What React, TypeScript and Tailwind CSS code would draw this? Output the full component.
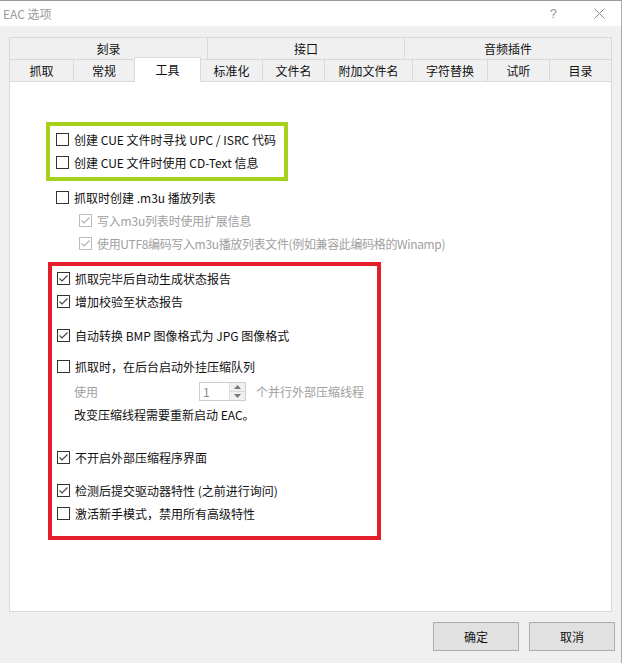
import React from "react";

function Box({ checked = false, disabled = false }: { checked?: boolean; disabled?: boolean }) {
  const c = disabled ? "#bcbcbc" : "#333333";
  return (
    <svg width="13" height="13" viewBox="0 0 13 13" className="shrink-0">
      <rect x="0.5" y="0.5" width="12" height="12" fill="#ffffff" stroke={c} />
      {checked && <path d="M2.5 6.5 L5 9 L10.5 3.5" fill="none" stroke={disabled ? "#b0b0b0" : "#444444"} strokeWidth="1.1" />}
    </svg>
  );
}

function Row({
  label,
  checked = false,
  disabled = false,
  cls = "",
  tcls = "",
}: {
  label: string;
  checked?: boolean;
  disabled?: boolean;
  cls?: string;
  tcls?: string;
}) {
  return (
    <div className={"flex h-[23px] items-center gap-[5px] " + cls}>
      <Box checked={checked} disabled={disabled} />
      <span className={"whitespace-nowrap leading-none " + (disabled ? "text-[#a0a0a0] " : "text-[#111111] ") + tcls}>{label}</span>
    </div>
  );
}

const row1 = [
  { t: "刻录", w: "w-[198px]" },
  { t: "接口", w: "w-[197px]" },
  { t: "音频插件", w: "w-[208px] border-r" },
];

export default function App() {
  return (
    <div className="w-[623px] h-[663px] bg-white font-['Microsoft_YaHei','Noto_Sans_CJK_SC',sans-serif] text-[12px]">
      <div className="w-[622px] h-[663px] bg-[#f0f0f0] border-r border-[#aaaaaa] flex flex-col">
        {/* title bar */}
        <div className="h-[26px] bg-white border-t border-[#9a9a9a] flex items-center pl-[3px] shrink-0">
          <span className="text-[#999999] leading-none">EAC 选项</span>
          <div className="flex-1" />
          <span className="text-[#999999] text-[13px] leading-none mr-[37px] font-['Liberation_Sans']">?</span>
          <svg width="11" height="11" viewBox="0 0 11 11" className="mr-[16px]">
            <path d="M0.5 0.5 L10.5 10.5 M10.5 0.5 L0.5 10.5" stroke="#8a8a8a" strokeWidth="1" />
          </svg>
        </div>

        <div className="pl-[9px] pt-[11px] flex flex-col">
          {/* tab row 1 */}
          <div className="flex h-[22px]">
            {row1.map((r) => (
              <div
                key={r.t}
                className={"h-[22px] border-t border-l border-[#d9d9d9] bg-[#f0f0f0] flex items-center justify-center text-[#111111] leading-none " + r.w}
              >
                {r.t}
              </div>
            ))}
          </div>
          {/* tab row 2 */}
          <div className="flex h-[22px] items-start">
            <Tab w="w-[64px]" t="抓取" />
            <Tab w="w-[61px]" t="常规" />
            <div className="relative z-10 w-[67px] -mr-[1px] -mt-[2px] h-[25px] bg-white border-t border-l border-r border-[#d9d9d9] flex items-center justify-center leading-none text-[#111111] pb-[1px]">
              工具
            </div>
            <Tab w="w-[62px]" t="标准化" />
            <Tab w="w-[62px]" t="文件名" />
            <Tab w="w-[88px]" t="附加文件名" />
            <Tab w="w-[75px]" t="字符替换" />
            <Tab w="w-[62px]" t="试听" />
            <Tab w="w-[63px] border-r" t="目录" />
          </div>

          {/* panel */}
          <div className="w-[603px] h-[531px] bg-white border border-[#d9d9d9] flex flex-col">
            <div className="mt-[40px] ml-[36px] w-[242px] border-[4px] border-[#a5d11c] pl-[6px] pt-[2px] pb-[3px]">
              <Row label="创建 CUE 文件时寻找 UPC / ISRC 代码" />
              <Row label="创建 CUE 文件时使用 CD-Text 信息" />
            </div>

            <Row cls="mt-[5px] pl-[46px]" label="抓取时创建 .m3u 播放列表" />
            <Row cls="pl-[69px]" tcls="tracking-[-0.2px]" label="写入m3u列表时使用扩展信息" checked disabled />
            <Row cls="pl-[69px]" tcls="tracking-[-0.35px]" label="使用UTF8编码写入m3u播放列表文件(例如兼容此编码格的Winamp)" checked disabled />

            <div className="mt-[7px] ml-[38px] w-[333px] border-[4px] border-[#e3202a] pl-[5px] pt-[1px] pb-[11px]">
              <Row label="抓取完毕后自动生成状态报告" checked />
              <Row label="增加校验至状态报告" checked />
              <Row cls="mt-[11px]" label="自动转换 BMP 图像格式为 JPG 图像格式" checked />
              <Row cls="mt-[8px]" label="抓取时，在后台启动外挂压缩队列" />
              <div className="mt-[2px] h-[23px] flex items-center pl-[17px]">
                <span className="w-[125px] text-[#a0a0a0] leading-none">使用</span>
                <div className="w-[47px] h-[19px] border border-[#cccccc] bg-white flex">
                  <div className="flex-1 flex items-center pl-[3px] text-[#8a8a8a] leading-none">1</div>
                  <div className="w-[16px] bg-[#f0f0f0] border-l border-[#e0e0e0] flex flex-col">
                    <div className="flex-1 flex items-center justify-center border-b border-[#d8d8d8]">
                      <svg width="7" height="4" viewBox="0 0 7 4"><path d="M0 4 L3.5 0 L7 4 Z" fill="#7a7a7a" /></svg>
                    </div>
                    <div className="flex-1 flex items-center justify-center">
                      <svg width="7" height="4" viewBox="0 0 7 4"><path d="M0 0 L3.5 4 L7 0 Z" fill="#7a7a7a" /></svg>
                    </div>
                  </div>
                </div>
                <span className="ml-[10px] text-[#a0a0a0] leading-none whitespace-nowrap">个并行外部压缩线程</span>
              </div>
              <div className="h-[23px] flex items-center pl-[17px] leading-none text-[#111111]">改变压缩线程需要重新启动 EAC。</div>
              <Row cls="mt-[20px]" label="不开启外部压缩程序界面" checked />
              <Row cls="mt-[10px]" label="检测后提交驱动器特性 (之前进行询问)" checked />
              <Row label="激活新手模式，禁用所有高级特性" />
            </div>
          </div>
        </div>

        {/* buttons */}
        <div className="mt-[10px] flex justify-end gap-[10px] pr-[6px]">
          <button className="w-[86px] h-[29px] bg-[#e1e1e1] border border-[#adadad] text-[#111111] leading-none">确定</button>
          <button className="w-[86px] h-[29px] bg-[#e1e1e1] border border-[#adadad] text-[#111111] leading-none">取消</button>
        </div>
      </div>
    </div>
  );
}

function Tab({ w, t }: { w: string; t: string }) {
  return (
    <div className={"h-[22px] border-t border-l border-[#d9d9d9] bg-[#f0f0f0] flex items-center justify-center leading-none text-[#111111] " + w}>
      {t}
    </div>
  );
}
